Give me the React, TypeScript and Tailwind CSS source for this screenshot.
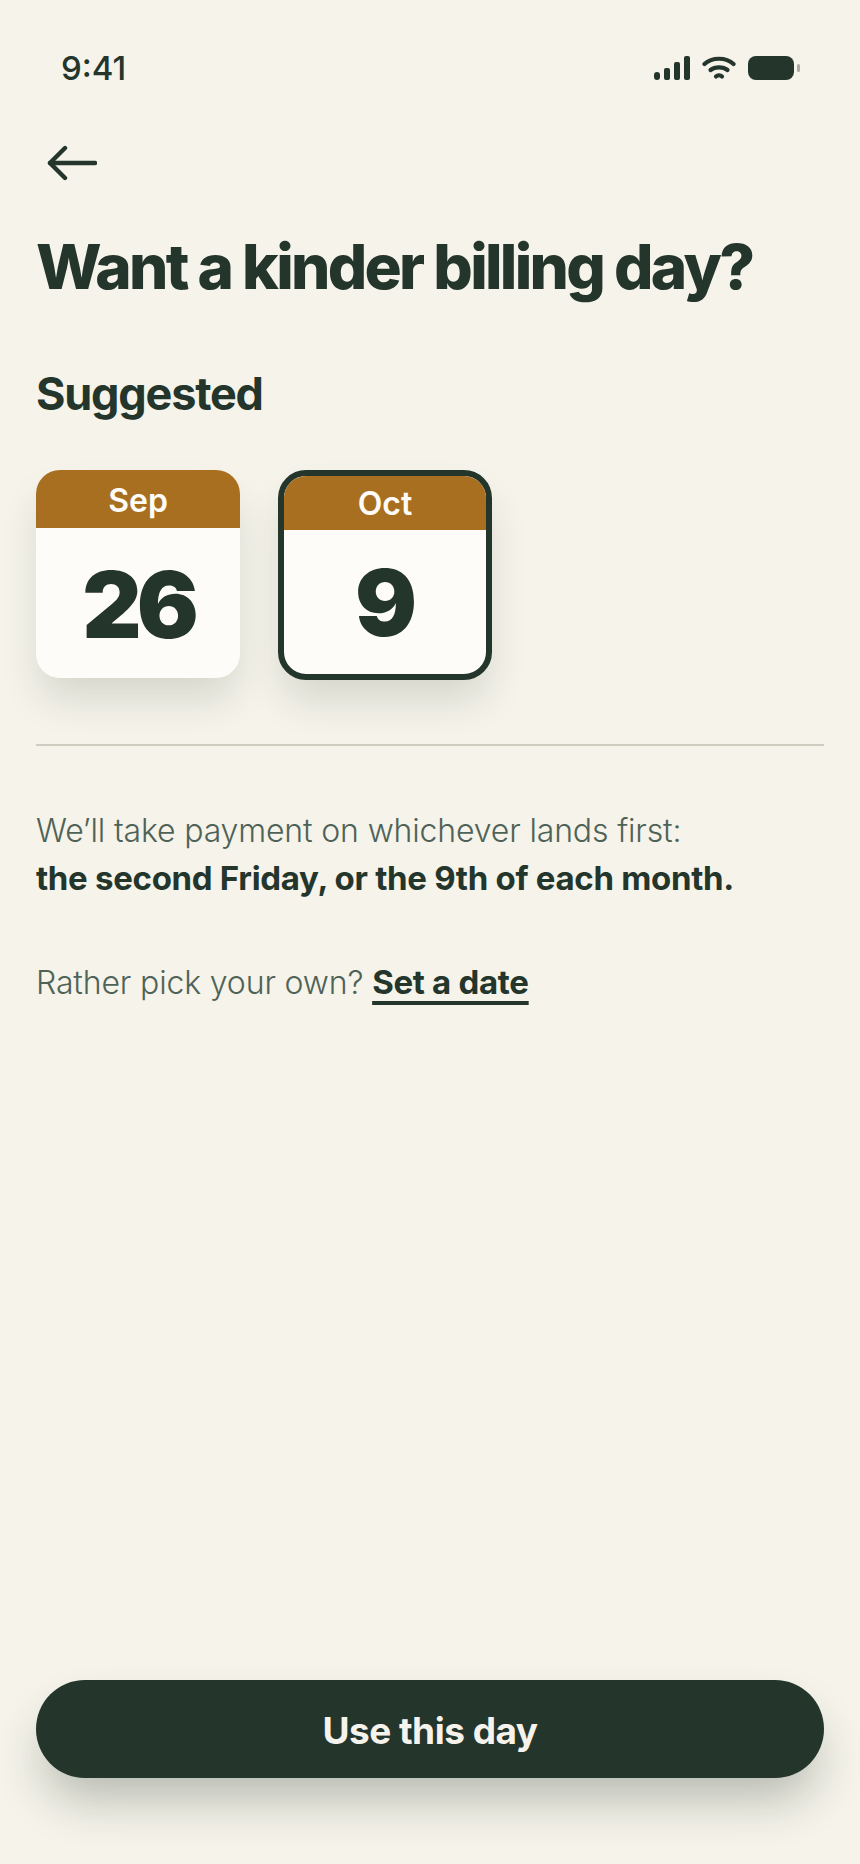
function Signal() {
  return (
    <svg width="36" height="24" viewBox="0 0 36 24" fill="#24352c">
      <rect x="0" y="16" width="6" height="8" rx="3" />
      <rect x="10" y="12" width="6" height="12" rx="2" />
      <rect x="20" y="6" width="6" height="18" rx="2" />
      <rect x="30" y="0" width="6" height="24" rx="2" />
    </svg>
  );
}

function Wifi() {
  return (
    <svg width="34" height="24" viewBox="0 0 34 24" fill="none" stroke="#24352c" strokeWidth="4.200" strokeLinecap="round">
      <path d="M2.500 8 C10 1 24 1 31.500 8" />
      <path d="M8.500 14 C13 10.500 21 10.500 25.500 14" />
      <path d="M14 20.500 C15.500 19 18.500 19 20 20.500" />
    </svg>
  );
}

function Battery() {
  return (
    <div className="flex items-center gap-[3px]">
      <div className="w-[46px] h-[24px] rounded-[8px] bg-[#24352c]" />
      <div className="w-[3px] h-[8px] rounded-full bg-[#a9aca4]" />
    </div>
  );
}

function Arrow() {
  return (
    <svg width="50" height="36" viewBox="0 0 50 36" fill="none" stroke="#24352c" strokeWidth="4.400" strokeLinecap="round" strokeLinejoin="round">
      <path d="M48 18 H3" />
      <path d="M18 3 L3 18 L18 33" />
    </svg>
  );
}

export default function App() {
  return (
    <div className="w-[860px] h-[1864px] bg-[#f5f3ea] flex flex-col overflow-hidden text-[#24352c]" style={{ fontFamily: "Inter, 'Liberation Sans', sans-serif" }}>
      <div className="h-[68px] mt-[34px] pl-[61px] pr-[60px] flex items-center justify-between">
        <span className="text-[33px] leading-[68px] font-medium">9:41</span>
        <div className="flex items-center gap-[12px]">
          <Signal />
          <Wifi />
          <Battery />
        </div>
      </div>
      <div className="mt-[43px] pl-[47px] h-[36px]">
        <Arrow />
      </div>
      <h1 className="mt-[46px] pl-[36px] text-[62px] leading-[80px] font-extrabold tracking-[-2.700px] whitespace-nowrap">Want a kinder billing day?</h1>
      <h2 className="mt-[59px] pl-[36px] text-[45px] leading-[56px] font-bold tracking-[-1.200px]">Suggested</h2>
      <div className="mt-[48px] pl-[36px] flex gap-[38px] items-start">
        <div className="w-[204px] h-[208px] rounded-[24px] bg-[#fdfcf8] overflow-hidden shadow-[0_24px_40px_-6px_rgba(36,53,44,0.16)]">
          <div className="h-[58px] pt-[3px] bg-[#a96f20] flex items-center justify-center text-[32px] font-semibold text-[#fdfcf8]">Sep</div>
          <div className="h-[150px] pt-[3px] flex items-center justify-center text-[92px] leading-none font-black tracking-[-5px]">26</div>
        </div>
        <div className="w-[214px] h-[210px] rounded-[28px] border-[6px] border-[#24352c] bg-[#fdfcf8] overflow-hidden shadow-[0_24px_40px_-6px_rgba(36,53,44,0.16)]">
          <div className="h-[54px] pt-[1px] bg-[#a96f20] flex items-center justify-center text-[32px] font-semibold text-[#fdfcf8]">Oct</div>
          <div className="h-[144px] pt-[2px] pl-[2px] flex items-center justify-center text-[92px] leading-none font-black">9</div>
        </div>
      </div>
      <div className="mt-[64px] mx-[36px] h-[2px] bg-[#cfccc0]" />
      <p className="mt-[61px] pl-[36px] text-[32px] leading-[48px] font-light text-[#4f6257] tracking-[-0.150px]">
        We’ll take payment on whichever lands first:
        <br />
        <span className="text-[33px] leading-none font-bold text-[#24352c] tracking-[-0.300px]">the second Friday, or the 9th of each month.</span>
      </p>
      <p className="mt-[56px] pl-[36px] text-[32px] leading-[48px] font-light text-[#4f6257] tracking-[-0.150px]">
        Rather pick your own? <span className="text-[33px] leading-none font-bold text-[#24352c] tracking-[-0.300px] underline decoration-[3.500px] underline-offset-[7px]">Set a date</span>
      </p>
      <div className="flex-1" />
      <button className="mx-[36px] mb-[86px] h-[98px] pt-[3px] rounded-full bg-[#24352c] text-[#f5f3ec] text-[37px] font-bold tracking-[-0.500px] shadow-[0_28px_48px_-8px_rgba(36,53,44,0.3)]">Use this day</button>
    </div>
  );
}
